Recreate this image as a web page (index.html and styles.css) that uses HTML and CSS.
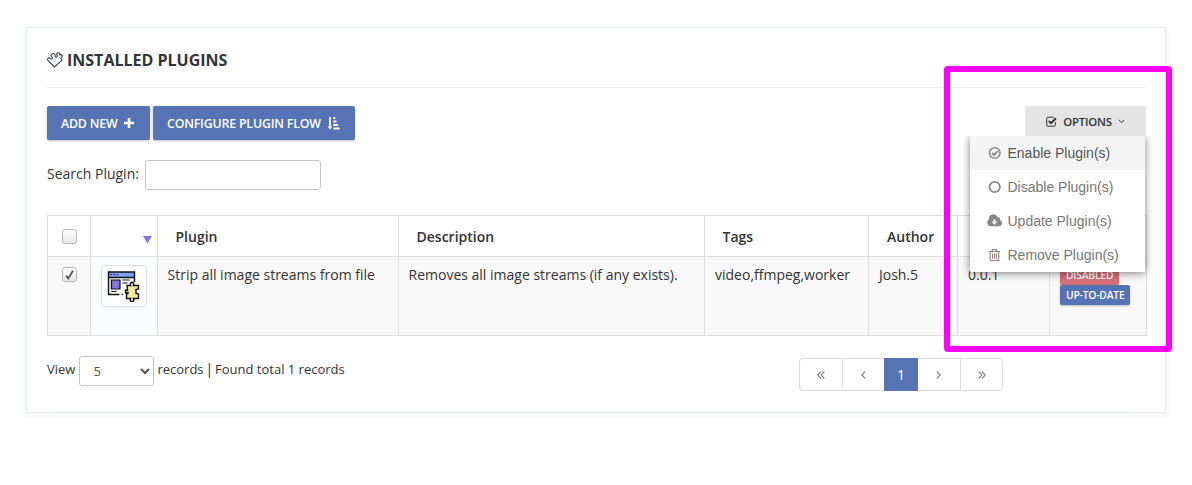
FILE: index.html
```html
<!DOCTYPE html>
<html lang="en">
<head>
<meta charset="utf-8">
<title>Installed Plugins</title>
<link rel="stylesheet" href="styles.css">
</head>
<body>
<main class="portlet">
  <header class="portlet-title">
    <svg class="title-icon" width="16" height="16" viewBox="0 0 16 16"><path d="M7.500 15 .7 8.200C.1 6.600 1.500 5.400 2.800 6l1.300 1c1.400 0 1.700-1.400.9-2.200L4 3.500C4.500 1.700 6.300.900 7.600 2.200 8.500 3.200 7.800 4.400 8.600 5c1 .5 2-.5 1.700-1.500L9.500 2C10 .6 11.700.3 12.500 1.500l.1 1.300 1.600-.2c1.300.7 1.300 2.300.2 3l-.6.9 1.200 1.700z" fill="none" stroke="#3f3f55" stroke-width="1.100"/></svg>
    <h1>INSTALLED PLUGINS</h1>
  </header>

  <div class="toolbar">
    <button class="btn">ADD NEW <svg width="10" height="10" viewBox="0 0 10 10"><path d="M3.700 0h2.600v3.700H10v2.600H6.300V10H3.700V6.300H0V3.700h3.700z" fill="currentColor"/></svg></button>
    <button class="btn btn-flow">CONFIGURE PLUGIN FLOW <svg width="13" height="13" viewBox="0 0 13 13"><path d="M2 0h1.800v9.500H5.300L2.900 12.500.5 9.500H2zM6.300 0h2v2h-2zM6.300 3.500h3.200v2H6.300zM6.300 7h4.700v2H6.300zM6.300 10.500H12.500v2H6.300z" fill="currentColor"/></svg></button>
    <div class="dropdown">
      <button class="options"><svg width="11" height="11" viewBox="0 0 11 11"><path d="M9.300 6v3a1.200 1.200 0 0 1-1.200 1.200H1.900A1.200 1.200 0 0 1 .7 9V2.400a1.200 1.200 0 0 1 1.200-1.200h6" fill="none" stroke="currentColor"/><path d="m2.700 4.800 2.300 2.300L10 2.200" fill="none" stroke="currentColor" stroke-width="1.900"/></svg><span>OPTIONS</span><svg width="7" height="5" viewBox="0 0 7 5"><path d="m.7.8 2.800 2.800L6.300.8" fill="none" stroke="currentColor"/></svg></button>
      <ul class="menu">
        <li class="active"><svg width="16" height="14" viewBox="0 0 16 14"><circle cx="7.700" cy="7" r="5.300" fill="none" stroke="currentColor" stroke-width="1.600"/><path d="m4.900 6.800 2.100 2.100 3.700-3.700" fill="none" stroke="currentColor" stroke-width="1.900"/></svg>Enable Plugin(s)</li>
        <li><svg width="16" height="14" viewBox="0 0 16 14"><circle cx="7.700" cy="7" r="5.200" fill="none" stroke="currentColor" stroke-width="1.800"/></svg>Disable Plugin(s)</li>
        <li><svg width="16" height="14" viewBox="0 0 16 14"><path d="M4 12.200a3.600 3.600 0 0 1-2-6.700A4.300 4.300 0 0 1 10.300 3.300a2.400 2.400 0 0 1 2.900 3.100 3 3 0 0 1-.5 5.800z" fill="currentColor"/><path d="M6.500 5.400h2v2.400h1.900L7.500 10.700 4.600 7.800h1.900z" fill="#fff"/></svg>Update Plugin(s)</li>
        <li><svg class="trash" width="16" height="14" viewBox="0 0 16 14"><path d="M2 3.500h11M5.300 3.300V1.500h4.400v1.800M3.200 3.500v9h8.600v-9M5.500 5.500v5.300M7.500 5.500v5.300M9.500 5.500v5.300" fill="none" stroke="currentColor" stroke-width="1.050"/></svg>Remove Plugin(s)</li>
      </ul>
    </div>
  </div>

  <label class="search"><span>Search Plugin:</span><input type="text"></label>

  <table class="grid">
    <colgroup><col class="c-check"><col class="c-icon"><col class="c-plugin"><col class="c-desc"><col class="c-tags"><col class="c-author"><col class="c-version"><col class="c-status"></colgroup>
    <thead>
      <tr><th><span class="check"></span></th><th class="sorted"><svg width="9" height="8" viewBox="0 0 9 8"><path d="M0 0h9L4.500 7.500z" fill="#8775d8"/></svg></th><th>Plugin</th><th>Description</th><th>Tags</th><th class="late">Author</th><th></th><th></th></tr>
    </thead>
    <tbody>
      <tr>
        <td><span class="check"><svg width="9" height="10" viewBox="0 0 9 10"><path d="m1 5.600 2.300 2.800L8 .8" fill="none" stroke="#555" stroke-width="1.800"/></svg></span></td>
        <td class="icon-cell"><span class="thumb"><svg width="34" height="32" viewBox="0 0 34 32">
          <path d="M1.500 2h26v23h-26z" fill="#fff"/><path d="M1.500 2h26v5h-26z" fill="#7ea0ff"/>
          <path d="M2.500 8h2v16h-2z" fill="#ddd"/>
          <path d="M12.500 24.500h-11V2h26v10M1.500 7.500h26" fill="none" stroke="#111" stroke-width="1.400"/>
          <path d="M3.500 4.600H5M6.500 4.600H8M9.500 4.600H11" stroke="#111"/>
          <path d="M4.500 10H13v9H4.500z" fill="#8775e0" stroke="#111" stroke-width="1.200"/>
          <path d="M15.500 10h7M15.500 13h5M4.500 21.500h5M14.500 24.300H16" stroke="#111" stroke-width="1.200"/>
          <path d="M20 15.500h3.600c-1.800-4.300 4.600-4.300 2.800 0H31.500v3.500l-2.500.5v4l2.500.5v4.500h-5.100c1.800 4.300-4.600 4.300-2.800 0H19.500V24l1.500-.5v-1l-2.500.2v-2.600l2 .1V19z" fill="#f4ed9b" stroke="#111" stroke-width="1.400"/>
        </svg></span></td>
        <td>Strip all image streams from file</td><td>Removes all image streams (if any exists).</td><td class="late">video,ffmpeg,worker</td><td class="late">Josh.5</td><td class="late">0.0.1</td>
        <td class="late"><div class="labels"><span class="label danger">DISABLED</span><span class="label">UP-TO-DATE</span></div></td>
      </tr>
    </tbody>
  </table>

  <footer class="footer">
    <div class="length"><span>View</span><select><option>5</option></select><span class="total">records<span class="separator">|</span>Found total 1 records</span></div>
    <nav class="pages">
      <a><svg width="8" height="8" viewBox="0 0 8 8"><path d="M4 .5.800 4 4 7.500M7.300.5 4.100 4l3.200 3.500"/></svg></a>
      <a><svg width="5" height="8" viewBox="0 0 5 8"><path d="M4.200.5.900 4l3.300 3.500"/></svg></a>
      <a class="current">1</a>
      <a><svg width="5" height="8" viewBox="0 0 5 8"><path d="M.8.500 4.100 4 .8 7.500"/></svg></a>
      <a><svg width="8" height="8" viewBox="0 0 8 8"><path d="M.7.500 3.900 4 .7 7.500M4 .5 7.200 4 4 7.500"/></svg></a>
    </nav>
  </footer>
</main>
<div class="highlight"></div>
</body>
</html>
```

FILE: styles.css
```css
* { box-sizing: border-box; }
body { margin: 0; padding: 27px 26px; background: #fff; color: #333; font: 14px/20px "Open Sans", sans-serif; }
button, input, select { font-family: inherit; }
.portlet { width: 1140px; height: 386px; padding: 12px 19px 15px 20px; border: 1px solid #e7ecf1; box-shadow: 0 2px 3px 2px rgba(0,0,0,.03); }
.portlet-title { display: flex; align-items: center; gap: 4px; width: 1098px; height: 48px; padding-bottom: 7px; border-bottom: 1px solid #eef1f5; }
.title-icon { margin-top: -1px; }
h1 { margin: 0; font-size: 16px; line-height: 20px; font-weight: 700; color: #2f353b; }
.toolbar { display: flex; align-items: flex-start; width: 1099px; height: 52px; padding-top: 18px; gap: 3px; }
.btn { display: flex; align-items: center; justify-content: flex-start; gap: 6px; width: 103px; height: 34px; padding: 0 0 0 14px; border: 0; border-radius: 2px; background: #5673b4; color: #fff; font-size: 12.400px; font-weight: 600; letter-spacing: -.2px; white-space: nowrap; box-shadow: 0 1px 3px rgba(0,0,0,.1), 0 1px 2px rgba(0,0,0,.18); }
.btn-flow { width: 202px; }
.dropdown { position: relative; margin-left: auto; }
.options { display: flex; align-items: center; justify-content: center; gap: 6px; width: 121px; height: 30px; padding: 0; border: 0; border-radius: 2px 2px 0 0; background: #e4e4e4; color: #333; font-size: 11.400px; font-weight: 600; letter-spacing: -.25px; }
.menu { position: absolute; z-index: 2; top: 30px; right: 1px; width: 175px; height: 136px; margin: 0; padding: 0; list-style: none; background: #fff; box-shadow: 0 1px 8px rgba(0,0,0,.5); border-radius: 1px; clip-path: inset(0 -12px -12px -12px); }
.menu li { display: flex; align-items: center; gap: 4.500px; height: 34px; padding-left: 17px; color: #777; font: 14px/20px "Liberation Sans", sans-serif; }
.menu svg { color: #888; }
.menu .trash { color: #96827b; }
.menu .active { background: #f5f5f5; color: #555; }
.search { display: flex; align-items: center; gap: 6px; height: 30px; margin-top: 20px; }
.search span { padding-bottom: 2px; }
.search input { width: 176px; height: 30px; border: 1px solid #c5c5c5; border-radius: 3px; }
.grid { width: 1100px; margin-top: 25px; table-layout: fixed; border-collapse: collapse; }
.c-check { width: 43px; } .c-icon { width: 67px; } .c-plugin { width: 241px; } .c-desc { width: 306px; }
.c-tags { width: 164px; } .c-author { width: 89px; } .c-version { width: 92px; } .c-status { width: 97px; }
.grid th, .grid td { border: 1px solid #ddd; white-space: nowrap; }
.grid th { height: 41px; padding: 1px 17px 0 17.500px; text-align: left; font-weight: 600; }
.grid th.late { padding-left: 18px; }
.grid th:first-child { padding: 1px 0 0 14px; }
.grid th.sorted { padding: 15px 5px 0; text-align: right; font-size: 0; }
.grid td { height: 79px; padding: 8px 9px 0 9.500px; vertical-align: top; background: #f9f9f9; }
.grid td.late { padding-left: 10px; }
.grid td:first-child { padding: 10px 0 0 14px; }
.grid td.icon-cell { background: #fafcff; }
.check { display: flex; align-items: center; justify-content: center; width: 15px; height: 15px; border: 1px solid #b8b8b8; border-radius: 3px; background: linear-gradient(#fff, #e8e8e8); }
.thumb { display: flex; align-items: center; justify-content: center; width: 46px; height: 42px; border: 1px solid #ddd; border-radius: 4px; background: #fff; }
.labels { display: flex; flex-direction: column; align-items: flex-start; }
.label { height: 20px; padding: 0 6px; border-radius: 2px; color: #fff; background: #5673b4; font-size: 10.300px; line-height: 20px; font-weight: 600; letter-spacing: -.2px; box-shadow: 0 1px 2px rgba(0,0,0,.25); }
.danger { background: #d6707b; }
.footer { display: flex; justify-content: space-between; padding: 20px 143px 0 0; }
.length { display: flex; gap: 4px; font-size: 13px; line-height: 27px; }
.length select { width: 75px; height: 30px; padding: 0 9px; border: 1px solid #c5c5c5; border-radius: 3px; background: #fff; color: #555; font-size: 13px; }
.total { margin-left: -1px; }
.separator { display: inline-block; width: 11.500px; text-align: center; font-size: 15px; line-height: 20px; }
.pages { display: flex; margin-top: 2px; height: 33px; }
.pages a { display: flex; align-items: center; justify-content: center; width: 43px; border: 1px solid #ddd; border-right: 0; }
.pages a:first-child { width: 43px; border-radius: 4px 0 0 4px; }
.pages a:last-child { border-right: 1px solid #ddd; border-radius: 0 4px 4px 0; }
.pages a:nth-child(2) { width: 42px; }
.pages a:nth-child(4) { width: 42px; border-left: 0; padding-right: 1px; }
.pages .current { width: 34px; padding-right: 1px; border-color: #5673b4; background: #5673b4; color: #fff; }
.pages path { fill: none; stroke: #888; stroke-width: 1.200; }
.highlight { position: absolute; z-index: 3; left: 944px; top: 66px; width: 228px; height: 286px; border: 6px solid #f0f; border-radius: 4px; pointer-events: none; }
```
